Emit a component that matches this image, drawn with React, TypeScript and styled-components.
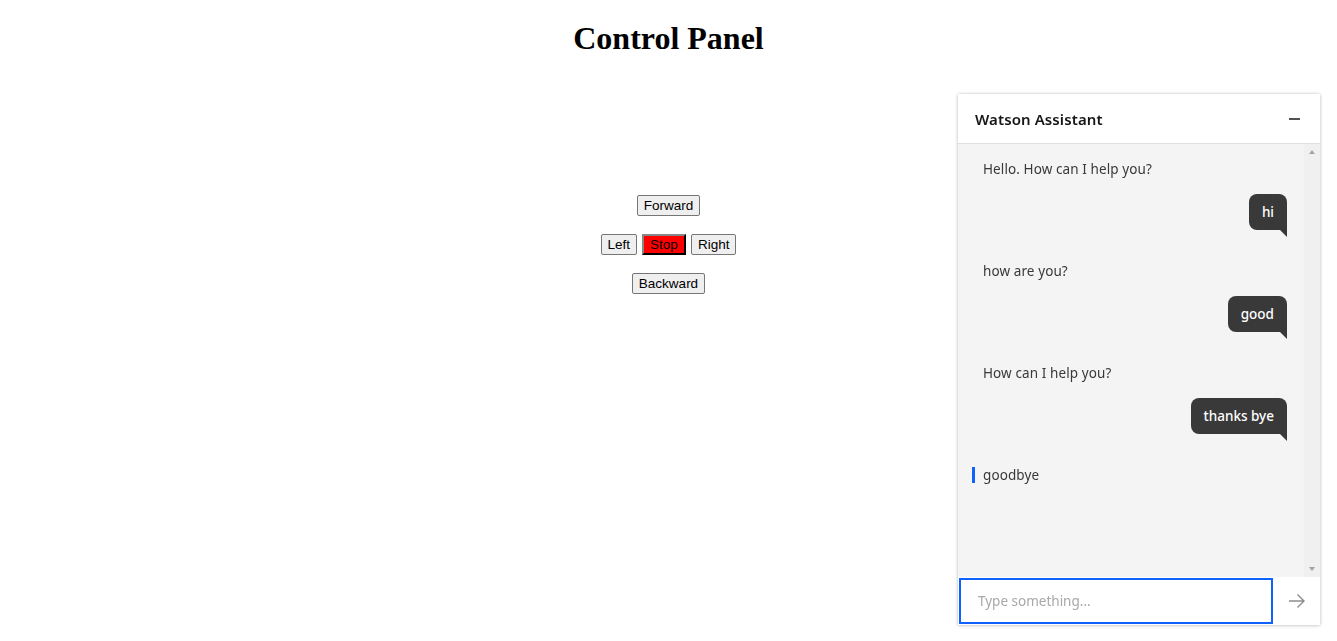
import React from "react";
import styled, { createGlobalStyle } from "styled-components";

const Global = createGlobalStyle`
  html, body { margin: 0; padding: 0; background: #ffffff; }
  body { font-family: "Liberation Serif", "Times New Roman", serif; }
  * { box-sizing: border-box; }
`;

const Page = styled.main`
  padding: 8px;
  min-height: 641px;
`;

const Title = styled.h1`
  margin: 12.44px 0 0;
  text-align: center;
  font-family: "Liberation Serif", "Times New Roman", serif;
  font-size: 32px;
  font-weight: 700;
  line-height: 37px;
  color: #000;
`;

const Pad = styled.section`
  margin-top: 138px;
  display: flex;
  flex-direction: column;
  align-items: center;
  gap: 18px;
`;

const PadRow = styled.div`
  display: flex;
  justify-content: center;
  gap: 5px;
`;

const PadButton = styled.button<{ $danger?: boolean }>`
  font-family: "Liberation Sans", Arial, sans-serif;
  font-size: 13.5px;
  line-height: 15px;
  height: 21px;
  padding: 1px 6px;
  color: #000;
  border-radius: 2px;
  background: ${(p) => (p.$danger ? "#ff0000" : "#efefef")};
  border: ${(p) => (p.$danger ? "2px outset #1a1a1a" : "1px solid #767676")};
  ${(p) => (p.$danger ? "border-radius: 0; border-color: #333 #111 #111 #333;" : "")}
  cursor: pointer;
`;

const Widget = styled.aside`
  position: fixed;
  right: 17px;
  bottom: 16px;
  width: 362px;
  height: 531px;
  display: flex;
  flex-direction: column;
  background: #ffffff;
  box-shadow: 0 0 3px rgba(0, 0, 0, 0.22), 0 1px 4px rgba(0, 0, 0, 0.1);
  font-family: "Noto Sans", "Open Sans", sans-serif;
`;

const Header = styled.header`
  height: 50px;
  flex: none;
  display: flex;
  align-items: center;
  justify-content: space-between;
  padding: 1px 17px 0;
  border-bottom: 1px solid #e0e0e0;
`;

const HeaderTitle = styled.h2`
  margin: 0;
  font-size: 15px;
  font-weight: 600;
  color: #161616;
  letter-spacing: 0.1px;
`;

const MinButton = styled.button`
  border: none;
  background: transparent;
  padding: 0;
  width: 16px;
  height: 16px;
  display: flex;
  align-items: center;
  justify-content: center;
  margin-right: 1px;
  cursor: pointer;
`;

const MinBar = styled.span`
  display: block;
  width: 11px;
  height: 2px;
  background: #525252;
`;

const Body = styled.div`
  flex: 1;
  display: flex;
  background: #f4f4f4;
  min-height: 0;
`;

const Messages = styled.div`
  flex: 1;
  padding: 15px 17px 0 25px;
  display: flex;
  flex-direction: column;
`;

const Track = styled.div`
  width: 16px;
  flex: none;
  background: #f0f0f0;
  display: flex;
  flex-direction: column;
  justify-content: space-between;
  align-items: center;
  padding: 6px 0;
`;

const Arrow = styled.span<{ $down?: boolean }>`
  width: 0;
  height: 0;
  border-left: 3.5px solid transparent;
  border-right: 3.5px solid transparent;
  ${(p) =>
    p.$down
      ? "border-top: 4px solid #a3a3a3;"
      : "border-bottom: 4px solid #a3a3a3;"}
`;

const BotText = styled.div<{ $latest?: boolean }>`
  position: relative;
  font-size: 13.5px;
  line-height: 20px;
  color: #393939;
  letter-spacing: 0.1px;
  margin-bottom: 15px;
  ${(p) =>
    p.$latest
      ? `&::before {
          content: "";
          position: absolute;
          left: -11px;
          top: 2px;
          width: 3px;
          height: 16px;
          background: #0f62fe;
        }`
      : ""}
`;

const Bubble = styled.div`
  position: relative;
  align-self: flex-end;
  background: #393939;
  color: #ffffff;
  font-size: 13.5px;
  font-weight: 500;
  line-height: 20px;
  padding: 8px 13px;
  border-radius: 8px 8px 0 8px;
  margin-bottom: 31px;
  &::after {
    content: "";
    position: absolute;
    right: 0;
    top: 100%;
    width: 0;
    height: 0;
    border-left: 7px solid transparent;
    border-top: 7px solid #393939;
  }
`;

const Composer = styled.form`
  height: 48px;
  flex: none;
  display: flex;
  background: #ffffff;
`;

const Input = styled.input`
  flex: 1;
  margin: 1px 0 1px 1px;
  border: 2px solid #0f62fe;
  outline: none;
  padding: 0 16px 0 17px;
  font-family: "Noto Sans", "Open Sans", sans-serif;
  font-size: 13.5px;
  color: #161616;
  background: #fff;
  caret-color: #161616;
  &::placeholder { color: #a8a8a8; }
`;

const Send = styled.button`
  width: 47px;
  flex: none;
  border: none;
  background: transparent;
  display: flex;
  align-items: center;
  justify-content: center;
  padding: 0;
  cursor: pointer;
`;

const conversation = [
  { bot: "Hello. How can I help you?", user: "hi" },
  { bot: "how are you?", user: "good" },
  { bot: "How can I help you?", user: "thanks bye" },
];

export default function App() {
  return (
    <>
      <Global />
      <Page>
        <Title>Control Panel</Title>
        <Pad>
          <PadRow>
            <PadButton>Forward</PadButton>
          </PadRow>
          <PadRow>
            <PadButton>Left</PadButton>
            <PadButton $danger>Stop</PadButton>
            <PadButton>Right</PadButton>
          </PadRow>
          <PadRow>
            <PadButton>Backward</PadButton>
          </PadRow>
        </Pad>
      </Page>
      <Widget>
        <Header>
          <HeaderTitle>Watson Assistant</HeaderTitle>
          <MinButton aria-label="Minimize">
            <MinBar />
          </MinButton>
        </Header>
        <Body>
          <Messages>
            {conversation.map((c) => (
              <React.Fragment key={c.user}>
                <BotText>{c.bot}</BotText>
                <Bubble>{c.user}</Bubble>
              </React.Fragment>
            ))}
            <BotText $latest>goodbye</BotText>
          </Messages>
          <Track>
            <Arrow />
            <Arrow $down />
          </Track>
        </Body>
        <Composer onSubmit={(e) => e.preventDefault()}>
          <Input placeholder="Type something..." autoFocus />
          <Send type="submit" aria-label="Send">
            <svg width="18" height="16" viewBox="0 0 18 16" fill="none">
              <path d="M1 8h15M9.5 1.5L16 8l-6.5 6.5" stroke="#8d8d8d" strokeWidth="1.4" />
            </svg>
          </Send>
        </Composer>
      </Widget>
    </>
  );
}
